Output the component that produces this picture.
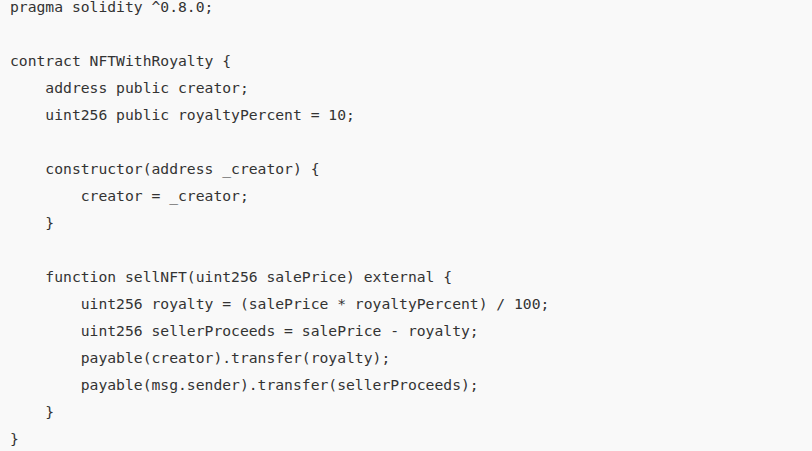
const code = `pragma solidity ^0.8.0;

contract NFTWithRoyalty {
    address public creator;
    uint256 public royaltyPercent = 10;

    constructor(address _creator) {
        creator = _creator;
    }

    function sellNFT(uint256 salePrice) external {
        uint256 royalty = (salePrice * royaltyPercent) / 100;
        uint256 sellerProceeds = salePrice - royalty;
        payable(creator).transfer(royalty);
        payable(msg.sender).transfer(sellerProceeds);
    }
}`;

export default function App() {
  return (
    <div className="h-[451px] w-[812px] overflow-hidden bg-[#f9f9f9]">
      <pre className="-mt-[7px] pl-[10px] font-['DejaVu_Sans_Mono',monospace] text-[14.7px] leading-[27px] text-[#333333]">
        {code}
      </pre>
    </div>
  );
}
